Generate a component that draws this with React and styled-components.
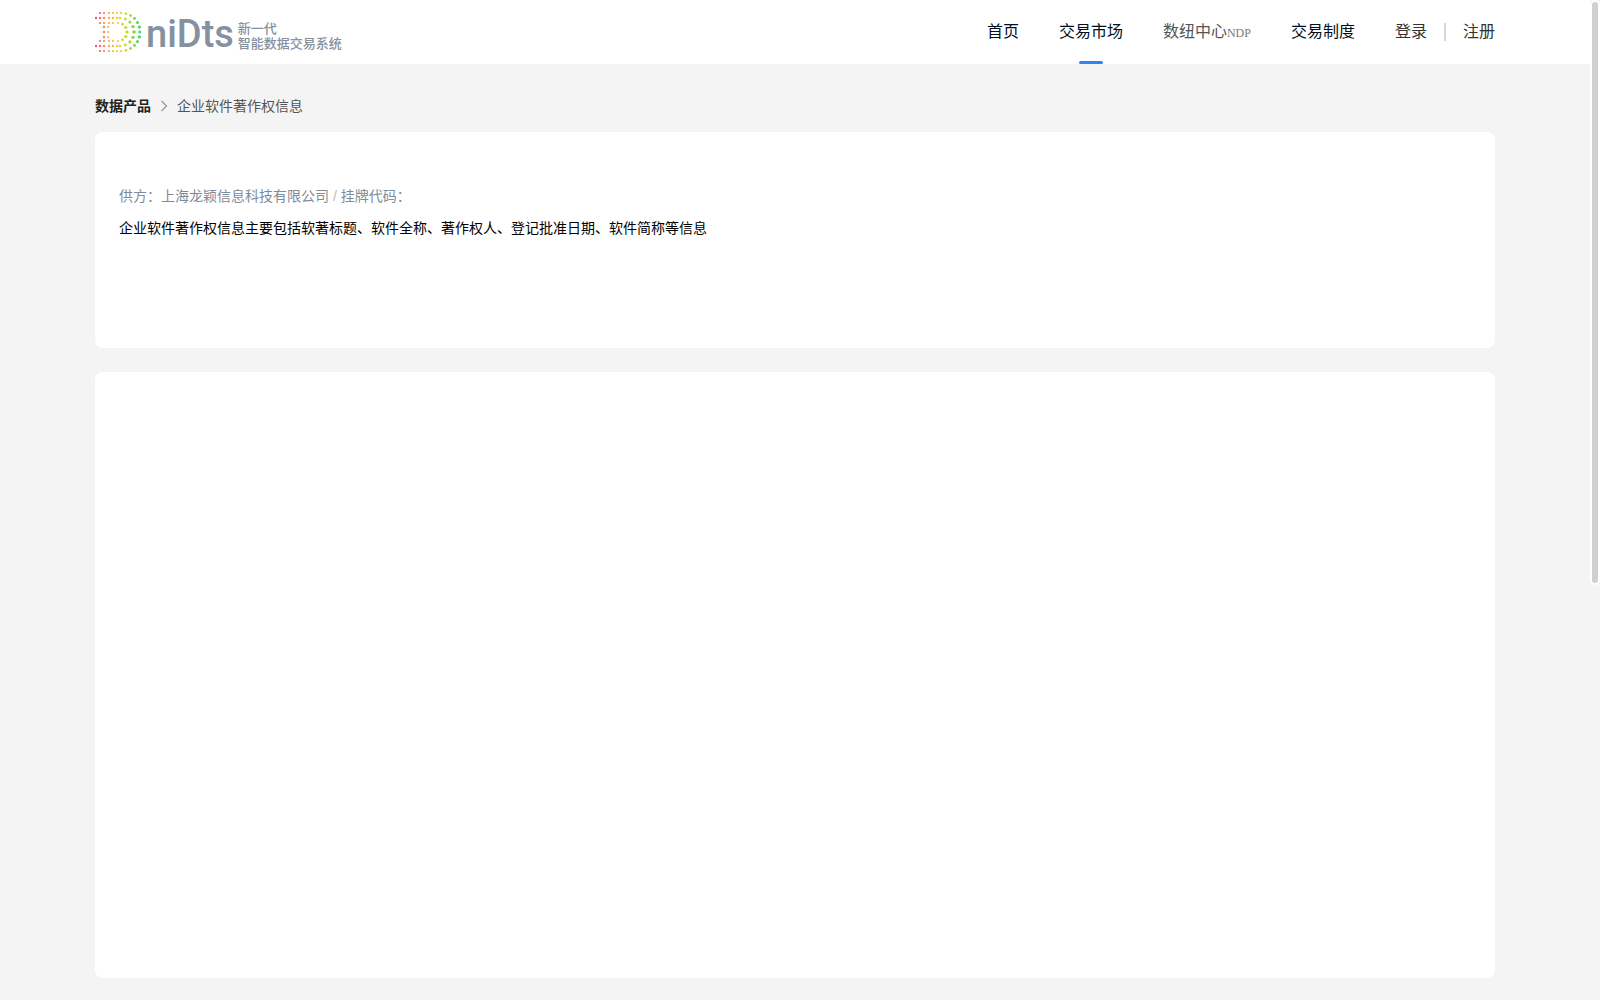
import React from 'react';
import styled, { createGlobalStyle } from 'styled-components';

const links = [
   { label: '首页', href: '#home' },
   { label: '交易市场', href: '#market', active: true },
   { label: '数纽中心', latin: 'NDP', href: '#ndp', muted: true },
   { label: '交易制度', href: '#rules' }
];

// x of the arc centre, radius and row starts of the three dotted strokes
const strokes = [
   { cx: 26, r: 19, starts: [5, 9, 14, 18, 22], arc: 12, size: 1.1 },
   { cx: 25, r: 14, starts: [1, 5, 9, 14, 18, 22], arc: 8, size: 1.2 },
   { cx: 23, r: 9, starts: [5, 9, 14, 18], arc: 6, size: 1.1 }
];

const dots = strokes.flatMap(({ cx, r, starts, arc, size }) => {
   const rows = starts.flatMap(x => [
      { x, y: 20 - r, size },
      { x, y: 20 + r, size }
   ]);
   const bend = Array.from({ length: arc + 1 }, (_, i) => {
      const angle = (i / arc - 0.5) * Math.PI;
      return {
         x: cx + r * Math.cos(angle),
         y: 20 + r * Math.sin(angle),
         size: size + 0.5 * Math.cos(angle)
      };
   });
   return [...rows, ...bend];
});

const stem = [15, 20, 25].flatMap(y => [
   { x: 9, y, size: 1.2 },
   { x: 13, y, size: 1 }
]);

const LogoMark = () => (
   <svg width="46" height="40" viewBox="0 0 46 40" aria-hidden="true">
      <defs>
         <linearGradient id="mark" gradientUnits="userSpaceOnUse" x1="0" y1="0" x2="46" y2="0">
            <stop offset="0" stopColor="#f5478b" />
            <stop offset=".13" stopColor="#fb7463" />
            <stop offset=".28" stopColor="#f7a045" />
            <stop offset=".45" stopColor="#ecd02b" />
            <stop offset=".68" stopColor="#c3d81f" />
            <stop offset=".85" stopColor="#83d83a" />
            <stop offset="1" stopColor="#2fdc78" />
         </linearGradient>
      </defs>
      <g fill="url(#mark)">
         {[...dots, ...stem].map((dot, i) => (
            <circle key={i} cx={dot.x} cy={dot.y} r={dot.size} />
         ))}
      </g>
   </svg>
);

const Chevron = () => (
   <svg width="8" height="12" viewBox="0 0 8 12" fill="none" stroke="#999" strokeWidth="1.3" aria-hidden="true">
      <path d="M1.5 1l5 5-5 5" />
   </svg>
);

const Header = () => (
   <Bar>
      <BarInner>
         <Logo href="#home">
            <LogoMark />
            <Wordmark>niDts</Wordmark>
            <Slogan>
               <span>新一代</span>
               <span>智能数据交易系统</span>
            </Slogan>
         </Logo>
         <Nav>
            {links.map(link => (
               <NavLink key={link.href} href={link.href} $active={link.active} $muted={link.muted}>
                  {link.label}
                  {link.latin && <Latin>{link.latin}</Latin>}
               </NavLink>
            ))}
            <Account>
               <AccountLink href="#login">登录</AccountLink>
               <Divider />
               <AccountLink href="#register">注册</AccountLink>
            </Account>
         </Nav>
      </BarInner>
   </Bar>
);

const App = () => (
   <Page>
      <GlobalStyle />
      <Header />
      <Main>
         <Breadcrumb>
            <a href="#products">数据产品</a>
            <Chevron />
            <span>企业软件著作权信息</span>
         </Breadcrumb>
         <Summary>
            <Supplier>供方：上海龙颖信息科技有限公司 <Slash>/</Slash> 挂牌代码：</Supplier>
            <Description>企业软件著作权信息主要包括软著标题、软件全称、著作权人、登记批准日期、软件简称等信息</Description>
         </Summary>
         <Detail />
      </Main>
      <ScrollThumb />
   </Page>
);

export default App;

const GlobalStyle = createGlobalStyle`
   * {
      box-sizing: border-box;
   }
   body {
      margin: 0;
      background: #f4f4f4;
      font-family: "Liberation Sans", "Noto Sans CJK SC", sans-serif;
      font-size: 14px;
   }
   a {
      color: inherit;
      text-decoration: none;
   }
   p {
      margin: 0;
   }
`;

const Page = styled.div`
   min-height: 100vh;
   padding-right: 10px;
   display: flex;
   flex-direction: column;
`;

const Bar = styled.header`
   background: #fff;
`;

const BarInner = styled.div`
   max-width: 1400px;
   height: 64px;
   margin: 0 auto;
   display: flex;
   justify-content: space-between;
   align-items: center;
`;

const Logo = styled.a`
   display: flex;
   align-items: center;
   color: #8691a0;
`;

const Wordmark = styled.span`
   margin-left: 5px;
   padding-top: 4px;
   font-family: Roboto, sans-serif;
   font-size: 38px;
   font-weight: 500;
   line-height: 40px;
`;

const Slogan = styled.span`
   margin-left: 4px;
   padding-top: 8px;
   display: flex;
   flex-direction: column;
   font-size: 13px;
   font-weight: 500;
   line-height: 15px;
`;

const Nav = styled.nav`
   height: 100%;
   display: flex;
   align-items: center;
   gap: 40px;
   font-size: 16px;
   line-height: 64px;
`;

const NavLink = styled.a`
   height: 100%;
   position: relative;
   color: ${props => props.$muted ? '#555' : '#000f1e'};
   &::after {
      content: "";
      display: ${props => props.$active ? 'block' : 'none'};
      width: 24px;
      height: 3px;
      border-radius: 2px;
      background: #3381f5;
      position: absolute;
      bottom: 0;
      left: 50%;
      margin-left: -12px;
   }
`;

const Latin = styled.span`
   color: #777;
   font-family: "Liberation Serif", serif;
   font-size: 12px;
`;

const Account = styled.div`
   height: 100%;
   display: flex;
   gap: 17px;
`;

const AccountLink = styled.a`
   color: #333;
`;

const Divider = styled.span`
   width: 2px;
   height: 18px;
   align-self: center;
   background: #d8d8d8;
`;

const Main = styled.main`
   width: 100%;
   max-width: 1400px;
   margin: 0 auto;
   padding-bottom: 22px;
   flex: 1;
   display: flex;
   flex-direction: column;
`;

const Breadcrumb = styled.nav`
   padding: 30px 0 14px;
   display: flex;
   align-items: center;
   gap: 9px;
   line-height: 24px;
   color: #555;
   a {
      color: #222;
      font-weight: bold;
   }
`;

const Card = styled.section`
   background: #fff;
   border-radius: 8px;
`;

const Summary = styled(Card)`
   min-height: 216px;
   padding: 52px 24px;
   display: flex;
   flex-direction: column;
   gap: 8px;
   line-height: 24px;
`;

const Supplier = styled.p`
   color: #808b99;
`;

const Slash = styled.span`
   color: #bbb;
`;

const Description = styled.p`
   color: #000;
`;

const Detail = styled(Card)`
   margin-top: 24px;
   flex: 1;
`;

const ScrollThumb = styled.div`
   width: 10px;
   height: 585px;
   position: fixed;
   top: 0;
   right: 0;
   border: 2px solid #fff;
   border-radius: 5px;
   background: #d0d0d0;
`;
